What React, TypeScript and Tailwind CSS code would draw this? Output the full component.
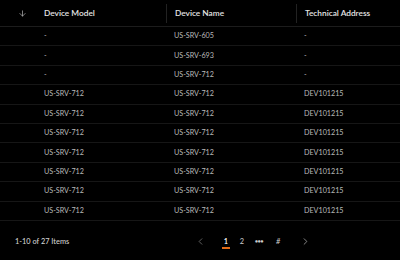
import { ArrowDown, ChevronLeft, ChevronRight } from "lucide-react";

type Row = { model: string; name: string; address: string };

const rows: Row[] = [
  { model: "-", name: "US-SRV-605", address: "-" },
  { model: "-", name: "US-SRV-693", address: "-" },
  { model: "-", name: "US-SRV-712", address: "-" },
  ...Array.from({ length: 7 }, () => ({ model: "US-SRV-712", name: "US-SRV-712", address: "DEV101215" })),
];

export default function App() {
  return (
    <div className="h-[260px] w-[400px] overflow-hidden bg-black font-['Lato',sans-serif]">
      <div className="flex h-[27px] items-center border-b border-[#1c1c1c] text-[8.3px] font-semibold text-[#e4e4e4]">
        <div className="flex w-[36px] justify-center pl-[8px]">
          <ArrowDown size={9} strokeWidth={1.8} className="text-[#bdbdbd]" />
        </div>
        <div className="w-[130px] pl-[8px]">Device Model</div>
        <div className="flex h-[19px] w-[130px] items-center border-l border-[#222] pl-[8px]">Device Name</div>
        <div className="flex h-[19px] flex-1 items-center border-l border-[#222] pl-[8px]">Technical Address</div>
      </div>
      {rows.map((r, i) => (
        <div key={i} className="flex h-[19.4px] items-center border-b border-[#161616] pt-[1px] text-[7.2px] text-[#bababa]">
          <div className="w-[36px]" />
          <div className="w-[130px] pl-[8px]">{r.model}</div>
          <div className="w-[130px] pl-[8px]">{r.name}</div>
          <div className="flex-1 pl-[8px]">{r.address}</div>
        </div>
      ))}
      <div className="relative flex h-[38px] items-center pt-[3px] text-[7.4px]">
        <div className="pl-[15px] font-medium text-[#d0d0d0]">1-10 of 27 Items</div>
        <div className="absolute left-[195px] top-[3px] flex h-[35px] items-center text-[#cfcfcf]">
          <ChevronLeft size={11} strokeWidth={1.5} className="text-[#8a8a8a]" />
          <div className="relative ml-[17px] w-[6px] text-center font-semibold text-white">
            1
            <span className="absolute left-[-1px] top-[11px] h-[2px] w-[8px] bg-[#e36b16]" />
          </div>
          <div className="ml-[10px] w-[6px] text-center">2</div>
          <div className="ml-[10px] text-[5px] tracking-[-0.3px]">●●●</div>
          <div className="ml-[13px] italic">#</div>
          <ChevronRight size={11} strokeWidth={1.5} className="ml-[20px] text-[#bdbdbd]" />
        </div>
      </div>
    </div>
  );
}
